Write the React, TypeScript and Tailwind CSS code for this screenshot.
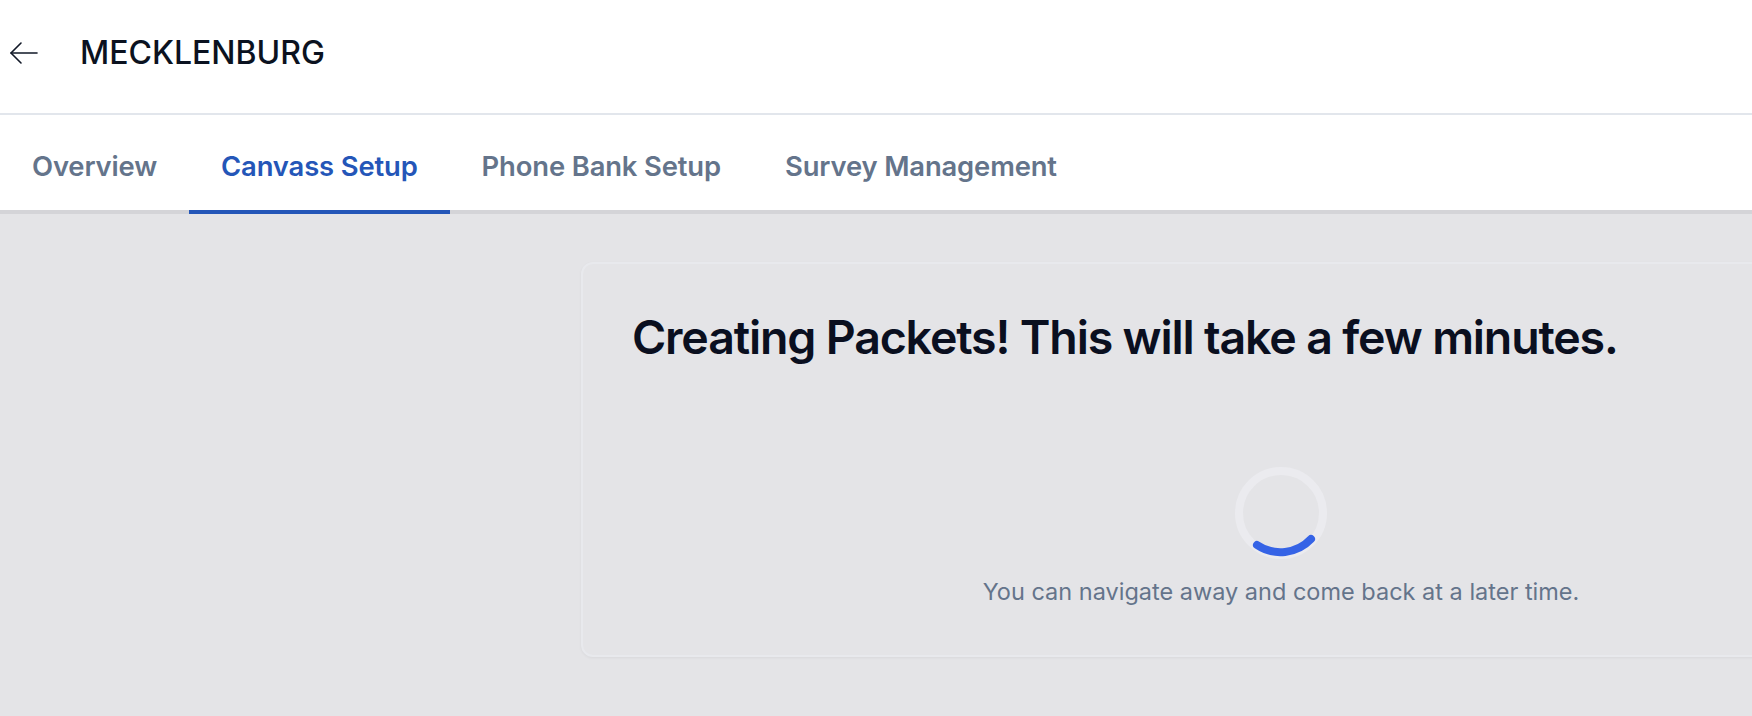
import { useState } from 'react'

const tabs = ['Overview', 'Canvass Setup', 'Phone Bank Setup', 'Survey Management']

const BackArrow = () => (
  <svg width="30" height="24" viewBox="0 0 30 24" fill="none" stroke="currentColor" strokeWidth="1.6" strokeLinecap="round" strokeLinejoin="round">
    <path d="M28 12H2" />
    <path d="M12 2L2 12l10 10" />
  </svg>
)

const Spinner = () => (
  <svg width="96" height="96" viewBox="0 0 96 96" fill="none">
    <circle cx="48" cy="48" r="42" stroke="#ebebef" strokeWidth="8" />
    {/* arc along the bottom, roughly 200deg -> 330deg */}
    <path d="M24 80 A42 42 0 0 0 78 74" stroke="#3563e6" strokeWidth="8" strokeLinecap="round" />
  </svg>
)

export default function App() {
  const [active, setActive] = useState(1)

  return (
    <div className="flex h-[716px] w-[1752px] flex-col overflow-hidden bg-[#e4e4e7] font-['Inter',sans-serif]">
      {/* Top bar — back + district name */}
      <header className="flex h-[115px] shrink-0 items-center border-b-2 border-[#e2e6ec] bg-white pb-[8px]">
        <button aria-label="Back" className="ml-[9px] flex items-center text-[#111827]">
          <BackArrow />
        </button>
        <h1 className="ml-[41px] text-[32px] font-medium text-[#0b1220]">MECKLENBURG</h1>
      </header>

      {/* Tabs */}
      <nav className="flex h-[99px] shrink-0 items-stretch border-b-4 border-[#d4d4d8] bg-white">
        {tabs.map((t, i) => (
          <button
            key={t}
            onClick={() => setActive(i)}
            className={
              i === active
                ? '-mb-1 border-b-4 border-[#2456b8] px-8 pt-[8px] text-[27.4px] font-semibold tracking-[-0.005em] text-[#2456b8]'
                : '-mb-1 border-b-4 border-transparent px-8 pt-[8px] text-[27.4px] font-semibold tracking-[-0.005em] text-[#64748b]'
            }
          >
            {t}
          </button>
        ))}
      </nav>

      {/* Content */}
      <main className="flex flex-1 pt-[48px] pl-[581px]">
        <section className="flex h-[395px] w-[1400px] shrink-0 flex-col rounded-xl border-2 border-[#e8e9ed] bg-[#e4e4e7] shadow-[0_1px_3px_rgba(0,0,0,0.05)]">
          <h2 className="mt-[39px] ml-[49px] text-[46.5px] font-semibold tracking-[-0.025em] text-[#0a0f1f]">
            Creating Packets! This will take a few minutes.
          </h2>
          <div className="mt-[92px] flex flex-col items-center">
            <Spinner />
            <p className="mt-[13px] text-[23.5px] text-[#64748b]">You can navigate away and come back at a later time.</p>
          </div>
        </section>
      </main>
    </div>
  )
}
